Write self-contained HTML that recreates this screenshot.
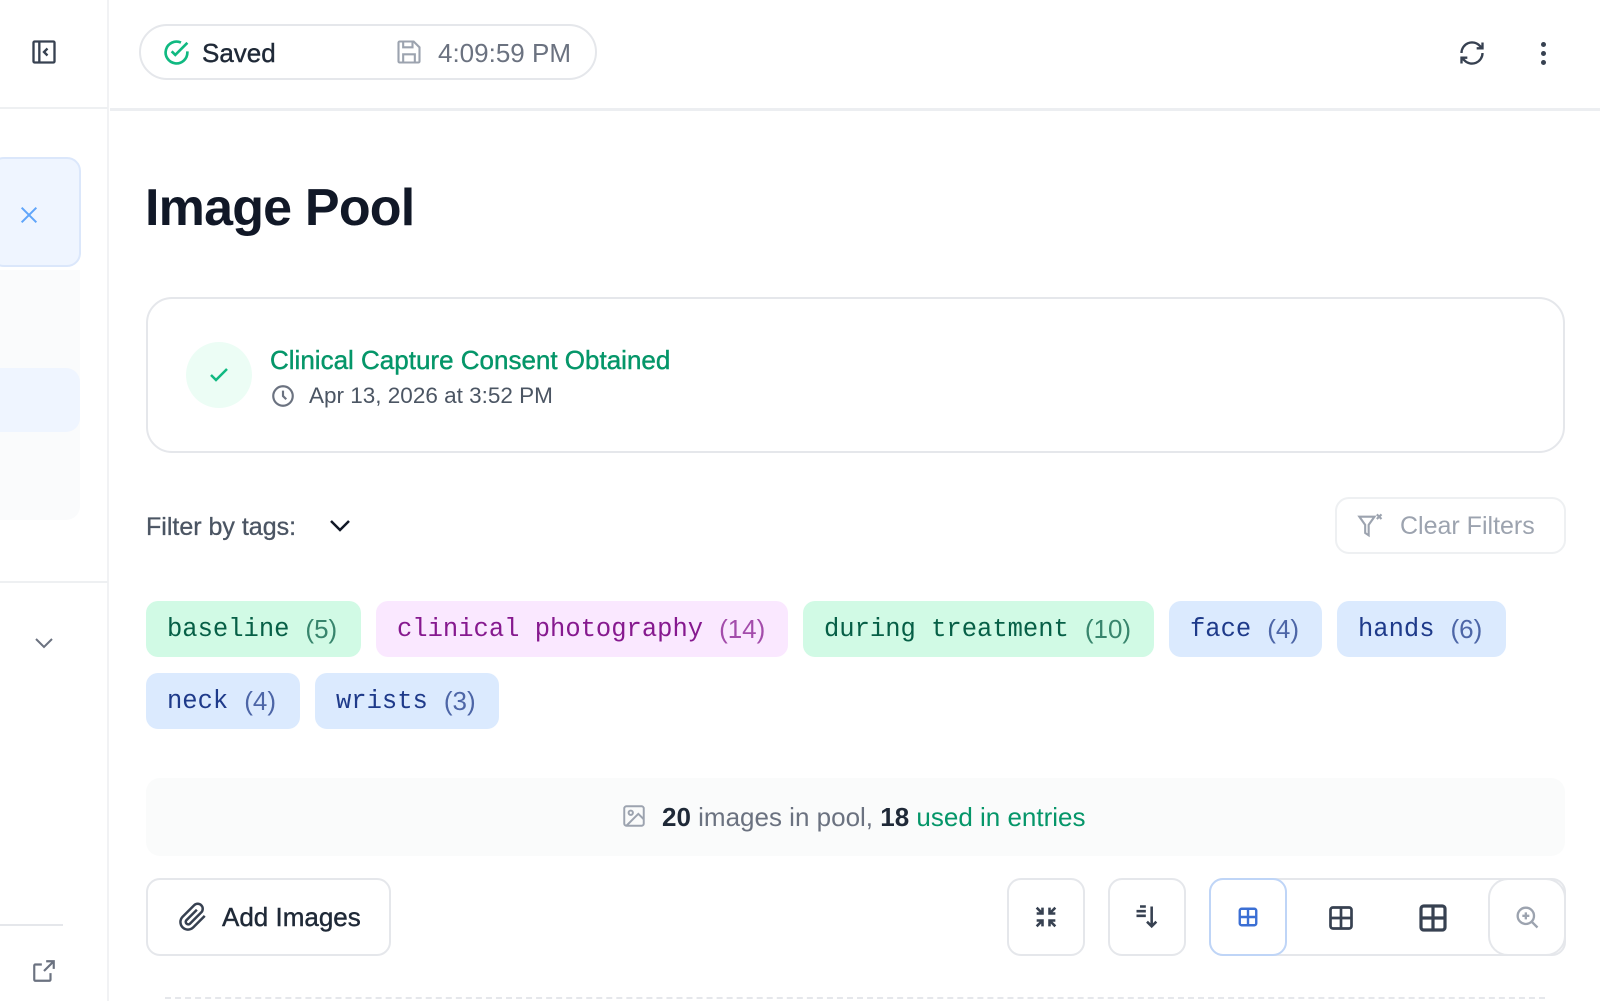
<!DOCTYPE html>
<html><head><meta charset="utf-8"><style>
*{box-sizing:border-box;margin:0;padding:0}
body{width:1600px;height:1001px;overflow:hidden;background:#fff;font-family:"Liberation Sans",sans-serif;position:relative;color:#111827}
.a{position:absolute}
.tag{position:absolute;height:56px;border-radius:12px;display:flex;align-items:center;padding:0 21px;font-size:25px;white-space:nowrap}
.tag .m{font-family:"Liberation Mono",monospace;margin-right:16px;font-size:25.5px}
.tag .c{opacity:.75;font-size:26px}
.g{background:#d1fae5;color:#065f46}.p{background:#fae8ff;color:#86198f}.b{background:#dbeafe;color:#1e3a8a}
.btn{position:absolute;border:2px solid #e5e7eb;border-radius:14px;background:#fff;display:flex;align-items:center;justify-content:center}
</style></head><body>
<div class="a" style="left:0;top:0;width:109px;height:1001px;border-right:2px solid #f1f2f4"></div>
<div class="a" style="left:0;top:107px;width:108px;height:2px;background:#eef0f2"></div>
<svg class="a" style="left:30px;top:38px" width="28" height="28" viewBox="0 0 24 24" fill="none" stroke="#374151" stroke-width="2"><rect x="3" y="3" width="18" height="18" rx="1"/><path d="M8 3v18M15 9l-3 3 3 3"/></svg>
<div class="a" style="left:-10px;top:157px;width:91px;height:110px;background:#eff5ff;border:2px solid #dbe7fb;border-radius:14px"></div>
<svg class="a" style="left:18px;top:204px" width="22" height="22" viewBox="0 0 24 24" stroke="#60a5fa" stroke-width="2.2"><path d="M4 4l16 16M20 4L4 20"/></svg>
<div class="a" style="left:0;top:270px;width:80px;height:250px;background:#fafbfc;border-radius:0 0 14px 0"></div>
<div class="a" style="left:0;top:368px;width:80px;height:64px;background:#eff5ff;border-radius:0 14px 14px 0"></div>
<div class="a" style="left:0;top:581px;width:108px;height:2px;background:#eef0f2"></div>
<svg class="a" style="left:33px;top:636px" width="22" height="14" viewBox="0 0 22 14" fill="none" stroke="#6b7280" stroke-width="2"><path d="M3 3l8 8 8-8"/></svg>
<div class="a" style="left:0;top:924px;width:63px;height:2px;background:#e5e7eb"></div>
<svg class="a" style="left:31px;top:958px" width="26" height="26" viewBox="0 0 24 24" fill="none" stroke="#6b7280" stroke-width="2"><path d="M14 3h7v7M21 3l-9 9M18 14v6a1 1 0 0 1-1 1H4a1 1 0 0 1-1-1V7a1 1 0 0 1 1-1h6"/></svg>
<div class="a" style="left:110px;top:108px;width:1490px;height:3px;background:#eceef1"></div>
<div class="a" style="left:139px;top:24px;width:458px;height:56px;border:2px solid #e5e7eb;border-radius:28px"></div>
<svg class="a" style="left:162px;top:38px" width="29" height="29" viewBox="0 0 24 24" fill="none" stroke="#10b981" stroke-width="2.2"><path d="M21 11.1V12a9 9 0 1 1-5.3-8.2"/><path d="M8 11l3 3L21 4"/></svg>
<div class="a" style="left:202px;top:38px;font-size:26px;color:#1f2937;-webkit-text-stroke:0.4px #1f2937">Saved</div>
<svg class="a" style="left:395px;top:38px" width="28" height="28" viewBox="0 0 24 24" fill="none" stroke="#9ca3af" stroke-width="1.8"><path d="M5 3h11l5 5v12a1 1 0 0 1-1 1H4a1 1 0 0 1-1-1V4a1 1 0 0 1 1-1z"/><path d="M7 3v5h8V3M7 21v-7h10v7"/></svg>
<div class="a" style="left:438px;top:38px;font-size:26px;color:#6b7280">4:09:59 PM</div>
<svg class="a" style="left:1458px;top:39px" width="28" height="28" viewBox="0 0 24 24" fill="none" stroke="#374151" stroke-width="2"><path d="M3 12a9 9 0 0 1 15.5-6.3L21 8M21 3v5h-5M21 12a9 9 0 0 1-15.5 6.3L3 16M3 21v-5h5"/></svg>
<div class="a" style="left:1541px;top:42px;width:5px;height:5px;border-radius:3px;background:#374151;box-shadow:0 9px 0 #374151,0 18px 0 #374151"></div>
<div class="a" style="left:145px;top:178px;font-size:52px;font-weight:bold;letter-spacing:-0.8px;color:#111827">Image Pool</div>
<div class="a" style="left:146px;top:297px;width:1419px;height:156px;border:2px solid #e5e7eb;border-radius:26px"></div>
<div class="a" style="left:186px;top:342px;width:66px;height:66px;border-radius:50%;background:#ecfdf5"></div>
<svg class="a" style="left:206px;top:363px" width="26" height="24" viewBox="0 0 24 24" fill="none" stroke="#10b981" stroke-width="2.5"><path d="M4 12l5 5L20 6"/></svg>
<div class="a" style="left:270px;top:345px;font-size:26px;color:#059669;-webkit-text-stroke:0.4px #059669">Clinical Capture Consent Obtained</div>
<svg class="a" style="left:270px;top:383px" width="26" height="26" viewBox="0 0 24 24" fill="none" stroke="#6b7280" stroke-width="2"><circle cx="12" cy="12" r="9"/><path d="M12 7v5l3 3"/></svg>
<div class="a" style="left:309px;top:383px;font-size:22.5px;color:#4b5563">Apr 13, 2026 at 3:52 PM</div>
<div class="a" style="left:146px;top:513px;font-size:25px;color:#4b5563;-webkit-text-stroke:0.3px #4b5563">Filter by tags:</div>
<svg class="a" style="left:328px;top:518px" width="24" height="16" viewBox="0 0 24 16" fill="none" stroke="#111827" stroke-width="2.5"><path d="M3 3l9 9 9-9"/></svg>
<div class="btn" style="left:1335px;top:497px;width:231px;height:57px;border-radius:14px;border-color:#eef0f2"></div>
<svg class="a" style="left:1357px;top:512px" width="28" height="28" viewBox="0 0 24 24" fill="none" stroke="#9ca3af" stroke-width="1.8"><path d="M2 4h13l-5 7v9l-3-2v-7z"/><path d="M17 2l4 4M21 2l-4 4"/></svg>
<div class="a" style="left:1400px;top:512px;font-size:25px;color:#9ca3af">Clear Filters</div>
<div class="tag g" style="left:146px;top:601px;width:215px"><span class="m">baseline</span><span class="c">(5)</span></div>
<div class="tag p" style="left:376px;top:601px;width:412px"><span class="m">clinical photography</span><span class="c">(14)</span></div>
<div class="tag g" style="left:803px;top:601px;width:351px"><span class="m">during treatment</span><span class="c">(10)</span></div>
<div class="tag b" style="left:1169px;top:601px;width:153px"><span class="m">face</span><span class="c">(4)</span></div>
<div class="tag b" style="left:1337px;top:601px;width:169px"><span class="m">hands</span><span class="c">(6)</span></div>
<div class="tag b" style="left:146px;top:673px;width:154px"><span class="m">neck</span><span class="c">(4)</span></div>
<div class="tag b" style="left:315px;top:673px;width:184px"><span class="m">wrists</span><span class="c">(3)</span></div>
<div class="a" style="left:146px;top:778px;width:1419px;height:78px;background:#fafbfb;border-radius:14px"></div>
<svg class="a" style="left:621px;top:803px" width="26" height="26" viewBox="0 0 24 24" fill="none" stroke="#9ca3af" stroke-width="1.8"><rect x="3" y="3" width="18" height="18" rx="2"/><circle cx="9" cy="9" r="2"/><path d="M21 15l-5-5L5 21"/></svg>
<div class="a" style="left:662px;top:802px;font-size:26px;color:#6b7280"><b style="color:#1f2937">20</b> images in pool, <b style="color:#1f2937">18</b> <span style="color:#059669">used in entries</span></div>
<div class="btn" style="left:146px;top:878px;width:245px;height:78px;justify-content:flex-start;padding-left:30px">
<svg width="30" height="30" viewBox="0 0 24 24" fill="none" stroke="#374151" stroke-width="2"><path d="M21.4 11.1l-9.2 9.2a6 6 0 0 1-8.5-8.5l9.2-9.2a4 4 0 0 1 5.7 5.7l-9.2 9.2a2 2 0 0 1-2.8-2.8l8.5-8.5"/></svg>
<span style="font-size:26px;color:#1f2937;margin-left:14px;-webkit-text-stroke:0.4px #1f2937">Add Images</span></div>
<div class="btn" style="left:1007px;top:878px;width:78px;height:78px"><svg width="28" height="28" viewBox="0 0 24 24" fill="none" stroke="#374151" stroke-width="2.2"><path d="M4 4l5 5M9 4v5H4M20 4l-5 5M15 4v5h5M4 20l5-5M4 15h5v5M20 20l-5-5M20 15h-5v5"/></svg></div>
<div class="btn" style="left:1108px;top:878px;width:78px;height:78px"><svg width="28" height="28" viewBox="0 0 24 24" fill="none" stroke="#374151" stroke-width="2.2"><path d="M3 7h8M3 11h8M6 3h5M16 3v17M12 16l4 4 4-4"/></svg></div>
<div class="btn" style="left:1209px;top:878px;width:357px;height:78px;border-radius:14px"></div>
<div class="btn" style="left:1209px;top:878px;width:78px;height:78px;border-color:#bfd5f7"><svg width="22" height="22" viewBox="0 0 24 24" fill="none" stroke="#3b6fd4" stroke-width="2.6"><rect x="3" y="3" width="18" height="18" rx="2"/><path d="M12 3v18M3 12h18"/></svg></div>
<svg class="a" style="left:1327px;top:904px" width="28" height="28" viewBox="0 0 24 24" fill="none" stroke="#374151" stroke-width="2.3"><rect x="3" y="3" width="18" height="18" rx="2"/><path d="M12 3v18M3 12h18"/></svg>
<svg class="a" style="left:1417px;top:902px" width="32" height="32" viewBox="0 0 24 24" fill="none" stroke="#374151" stroke-width="2.4"><rect x="3" y="3" width="18" height="18" rx="2"/><path d="M12 3v18M3 12h18"/></svg>
<div class="btn" style="left:1488px;top:878px;width:78px;height:78px;border-radius:20px"><svg width="28" height="28" viewBox="0 0 24 24" fill="none" stroke="#9ca3af" stroke-width="2"><circle cx="11" cy="11" r="7"/><path d="M21 21l-5-5M11 8v6M8 11h6"/></svg></div>
<div class="a" style="left:165px;top:997px;width:1380px;height:0;border-top:2px dashed #e5e7eb"></div>
</body></html>
